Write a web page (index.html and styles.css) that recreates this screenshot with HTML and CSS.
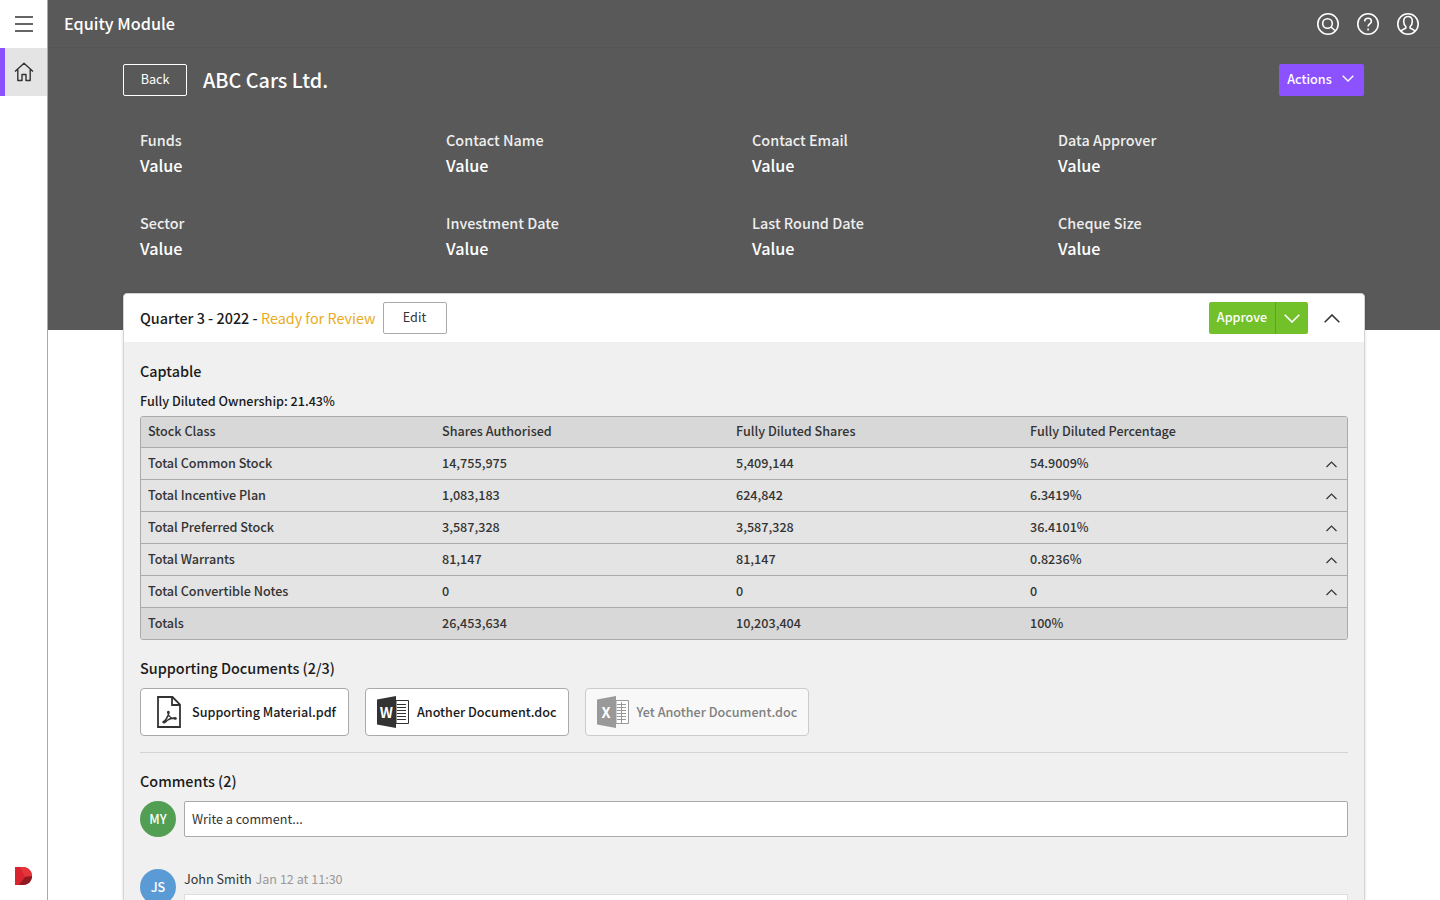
FILE: index.html
```html
<!DOCTYPE html>
<html lang="en">

<head>
  <meta charset="UTF-8">
  <meta name="viewport" content="width=device-width, initial-scale=1.0">
  <title>Equity Module</title>
  <link rel="stylesheet" href="styles.css">
</head>

<body>
  <div class="app">
    <nav class="sideNav">
      <div class="menuBtn">
        <svg width="18" height="16" viewBox="0 0 18 16" fill="none" stroke="#333" stroke-width="1.5">
          <path d="M0 1h18M0 8h18M0 15h18" />
        </svg>
      </div>
      <div class="navItem">
        <svg width="20" height="20" viewBox="0 0 20 20" fill="none" stroke="#333" stroke-width="1.4" stroke-linejoin="round">
          <path d="M1 9.500 10 1.200l9 8.300M3.800 7.500V18.500h4.200v-6h4v6h4.200V7.500" />
        </svg>
      </div>
      <div class="navLogo">
        <svg width="17" height="18" viewBox="0 0 17 18">
          <path d="M0 0h8c5 0 9 4 9 9s-4 9-9 9H0z" fill="#d9232e" />
          <path d="M5 0h3c5 0 9 4 9 9l-7 1z" fill="#e5343a" />
          <path d="M17 9c0 5-4 9-9 9H4l6-8z" fill="#8f1a20" />
        </svg>
      </div>
    </nav>

    <div class="mainWrap">
      <header class="topBar">
        <span class="topTitle">Equity Module</span>
        <div class="topIcons">
          <svg width="24" height="24" viewBox="0 0 24 24" fill="none" stroke="#fff" stroke-width="1.6">
            <circle cx="12" cy="12" r="10.200" />
            <circle cx="11.500" cy="11.500" r="4.800" />
            <path d="m15 15 4 3.500" />
          </svg>
          <svg width="24" height="24" viewBox="0 0 24 24" fill="none" stroke="#fff" stroke-width="1.6">
            <circle cx="12" cy="12" r="10.200" />
            <path d="M8.700 9.500c0-2 1.500-3.300 3.400-3.300s3.300 1.200 3.300 3c0 2.600-3.300 2.700-3.300 5.300" />
            <path d="M12.100 16.500v2" />
          </svg>
          <svg width="24" height="24" viewBox="0 0 24 24" fill="none" stroke="#fff" stroke-width="1.6">
            <circle cx="12" cy="12" r="10.200" />
            <path d="M5 19.500c.5-2 3.400-2.300 4.800-3.400v-1.600C8.300 13.300 7.700 11.400 7.700 9.500c0-3 1.700-5 4.300-5s4.300 2 4.300 5c0 1.900-.6 3.800-2.100 5v1.600c1.400 1.100 4.300 1.400 4.800 3.400" />
          </svg>
        </div>
      </header>

      <section class="banner">
        <div class="bannerHead">
          <a class="btn btnBack">Back</a>
          <h1>ABC Cars Ltd.</h1>
          <a class="btn btnActions">Actions
            <svg width="12" height="7" viewBox="0 0 12 7" fill="none" stroke="#fff" stroke-width="1.4">
              <path d="m.7.700 5.300 5.300 5.300-5.300" />
            </svg>
          </a>
        </div>
        <dl class="infoGrid">
          <div><dt>Funds</dt><dd>Value</dd></div>
          <div><dt>Contact Name</dt><dd>Value</dd></div>
          <div><dt>Contact Email</dt><dd>Value</dd></div>
          <div><dt>Data Approver</dt><dd>Value</dd></div>
          <div><dt>Sector</dt><dd>Value</dd></div>
          <div><dt>Investment Date</dt><dd>Value</dd></div>
          <div><dt>Last Round Date</dt><dd>Value</dd></div>
          <div><dt>Cheque Size</dt><dd>Value</dd></div>
        </dl>
      </section>

      <section class="card">
        <div class="cardHead">
          <h2 class="quarter">Quarter 3 - 2022 - <span class="status">Ready for Review</span></h2>
          <a class="btn btnEdit">Edit</a>
          <div class="approveGroup">
            <a class="approveBtn">Approve</a>
            <a class="approveArrow">
              <svg width="16" height="9" viewBox="0 0 16 9" fill="none" stroke="#fff" stroke-width="1.600">
                <path d="m.7.700 7.300 7.300 7.300-7.300" />
              </svg>
            </a>
          </div>
          <svg class="collapse" width="16" height="9" viewBox="0 0 16 9" fill="none" stroke="#333" stroke-width="1.600">
            <path d="m.7 8.300 7.300-7.300 7.300 7.300" />
          </svg>
        </div>

        <div class="cardBody">
          <h3>Captable</h3>
          <p class="ownership">Fully Diluted Ownership: 21.43%</p>

          <div class="capTable">
            <div class="row rowHead">
              <span>Stock Class</span><span>Shares Authorised</span><span>Fully Diluted Shares</span><span>Fully Diluted Percentage</span>
            </div>
            <div class="row">
              <span>Total Common Stock</span><span>14,755,975</span><span>5,409,144</span><span>54.9009%</span>
              <svg class="rowArrow" width="11" height="7" viewBox="0 0 11 7" fill="none" stroke="#333" stroke-width="1.200"><path d="m.5 6 5-5 5 5" /></svg>
            </div>
            <div class="row">
              <span>Total Incentive Plan</span><span>1,083,183</span><span>624,842</span><span>6.3419%</span>
              <svg class="rowArrow" width="11" height="7" viewBox="0 0 11 7" fill="none" stroke="#333" stroke-width="1.200"><path d="m.5 6 5-5 5 5" /></svg>
            </div>
            <div class="row">
              <span>Total Preferred Stock</span><span>3,587,328</span><span>3,587,328</span><span>36.4101%</span>
              <svg class="rowArrow" width="11" height="7" viewBox="0 0 11 7" fill="none" stroke="#333" stroke-width="1.200"><path d="m.5 6 5-5 5 5" /></svg>
            </div>
            <div class="row">
              <span>Total Warrants</span><span>81,147</span><span>81,147</span><span>0.8236%</span>
              <svg class="rowArrow" width="11" height="7" viewBox="0 0 11 7" fill="none" stroke="#333" stroke-width="1.200"><path d="m.5 6 5-5 5 5" /></svg>
            </div>
            <div class="row">
              <span>Total Convertible Notes</span><span>0</span><span>0</span><span>0</span>
              <svg class="rowArrow" width="11" height="7" viewBox="0 0 11 7" fill="none" stroke="#333" stroke-width="1.200"><path d="m.5 6 5-5 5 5" /></svg>
            </div>
            <div class="row rowTotal">
              <span>Totals</span><span>26,453,634</span><span>10,203,404</span><span>100%</span>
            </div>
          </div>

          <h3 class="docsTitle">Supporting Documents (2/3)</h3>
          <div class="docs">
            <a class="docBtn docPdf">
              <svg width="24" height="32" viewBox="0 0 24 32" fill="none" stroke="#333" stroke-width="1.800">
                <path d="M1 1h14.500L23 8.500V31H1zM15 1v8h8" />
                <path d="M6 26c2-.5 5-5 6-9.500.3-1.500-1.500-1.500-1.300 0 .5 3.500 4 6 7.500 6.500 1.200.2 1.200-1.300 0-1.200-3.200.2-7.200 1.500-9.700 4.200-1 1-2.500.8-2.500 0z" stroke-width="1.500" />
              </svg>
              Supporting Material.pdf
            </a>
            <a class="docBtn">
              <svg width="32" height="32" viewBox="0 0 32 32">
                <path d="M19 4.500h12.500v23H19z" fill="#fff" stroke="#333" />
                <path d="M20 8.500h9M20 11.500h9M20 14.500h9M20 17.500h9M20 20.500h9M20 23.500h9" stroke="#333" />
                <path d="M0 3.500 19 0v32L0 28.500z" fill="#333" />
              </svg>
              <span class="docGlyph">W</span>
              Another Document.doc
            </a>
            <a class="docBtn docDisabled">
              <svg width="32" height="32" viewBox="0 0 32 32">
                <path d="M19 4.500h12.500v23H19z" fill="#fff" stroke="#999" />
                <path d="M20 8.500h9M20 11.500h9M20 14.500h9M20 17.500h9M20 20.500h9M20 23.500h9M24.500 6v21" stroke="#999" />
                <path d="M0 3.500 19 0v32L0 28.500z" fill="#999" />
              </svg>
              <span class="docGlyph">X</span>
              Yet Another Document.doc
            </a>
          </div>

          <hr class="divider">

          <h3 class="commentsTitle">Comments (2)</h3>
          <div class="commentNew">
            <span class="avatar avatarGreen">MY</span>
            <div class="commentInput">Write a comment...</div>
          </div>
          <div class="comment">
            <span class="avatar avatarBlue">JS</span>
            <div class="commentMain">
              <div class="commentMeta"><span class="commentName">John Smith</span><span class="commentDate">Jan 12 at 11:30</span></div>
              <div class="commentText"></div>
            </div>
          </div>
        </div>
      </section>
    </div>
  </div>
</body>

</html>
```
FILE: styles.css
```css
* {
  box-sizing: border-box;
}

html,
body {
  height: 100%;
  margin: 0;
  overflow: hidden;
}

body {
  background-color: #fff;
  color: #333;
  font-family: "Noto Sans CJK JP", "Noto Sans", sans-serif;
  font-size: 12.6px;
  line-height: 20px;
}

.app {
  display: flex;
  height: 900px;
}

/* side nav */
.sideNav {
  display: flex;
  flex-direction: column;
  flex: 0 0 48px;
  border-right: 1px solid #aaa;
}

.menuBtn {
  display: flex;
  align-items: center;
  justify-content: center;
  height: 48px;
}

.navItem {
  display: flex;
  align-items: center;
  justify-content: center;
  height: 48px;
  background-color: #e4e4e4;
  border-left: 5px solid #8c52ff;
  padding-right: 5px;
}

.navLogo {
  display: flex;
  justify-content: center;
  margin-top: auto;
  padding-bottom: 15px;
}

/* top */
.mainWrap {
  flex: 1;
  min-width: 0;
}

.topBar {
  display: flex;
  align-items: center;
  justify-content: space-between;
  height: 48px;
  padding: 0 20px 0 16px;
  background-color: #595959;
  border-bottom: 1px solid #555;
}

.topTitle {
  margin-top: -1px;
  color: #fff;
  font-size: 16.2px;
  font-weight: 500;
}

.topIcons {
  display: flex;
  gap: 16px;
}

.banner {
  height: 282px;
  padding: 16px 76px 0 75px;
  background-color: #595959;
  color: #fff;
}

.bannerHead {
  display: flex;
  align-items: center;
  height: 32px;
}

.bannerHead h1 {
  margin: -1px 0 0 16px;
  font-size: 19.8px;
  font-weight: 500;
}

.btn {
  display: flex;
  align-items: center;
  justify-content: center;
  height: 32px;
  padding-bottom: 3px;
  border-radius: 2px;
}

.btnBack {
  width: 64px;
  border: 1px solid #fff;
  color: #fff;
}

.btnActions {
  gap: 10px;
  width: 85px;
  margin-left: auto;
  padding-right: 2px;
  background-color: #8c52ff;
  color: #fff;
  font-weight: 500;
}

.infoGrid {
  display: grid;
  grid-template-columns: repeat(4, 306px);
  row-gap: 33px;
  margin: 32px 0 0;
  padding-left: 17px;
}

.infoGrid dt {
  font-size: 14.4px;
  font-weight: 500;
  line-height: 24px;
  color: #eee;
}

.infoGrid dd {
  margin: 0;
  font-size: 16.2px;
  font-weight: 500;
  line-height: 26px;
}

/* card */
.card {
  margin: -37px 75px 0;
  border: 1px solid #d4d4d4;
  border-radius: 4px 4px 0 0;
  background-color: #f0f0f0;
  box-shadow: 0 0 3px rgba(0, 0, 0, .15);
  position: relative;
}

.cardHead {
  display: flex;
  align-items: center;
  height: 48px;
  padding: 0 24px 0 16px;
  background-color: #fff;
  border-radius: 4px 4px 0 0;
}

.quarter {
  margin: 0;
  color: #1a1a1a;
  font-size: 14.4px;
  font-weight: 500;
}

.status {
  color: #eaab1c;
  font-weight: 400;
}

.btnEdit {
  width: 64px;
  margin-left: 7px;
  border: 1px solid #aaa;
}

.approveGroup {
  display: flex;
  height: 32px;
  margin-left: auto;
  background-color: #72c12a;
  border-radius: 2px;
  color: #fff;
}

.approveBtn {
  display: flex;
  align-items: center;
  justify-content: center;
  width: 67px;
  padding-bottom: 3px;
  border-right: 1px solid #5ea51c;
  font-weight: 500;
}

.approveArrow {
  display: flex;
  align-items: center;
  justify-content: center;
  width: 32px;
}

.collapse {
  margin-left: 16px;
}

.cardBody {
  padding: 17px 16px 0;
}

.cardBody h3 {
  margin: 0;
  color: #1a1a1a;
  font-size: 14.4px;
  font-weight: 500;
  line-height: 24px;
}

.ownership {
  margin: 8px 0 5px;
  color: #1a1a1a;
  font-weight: 500;
}

/* table */
.capTable {
  border: 1px solid #aaa;
  border-radius: 3px;
  background-color: #e4e4e4;
}

.row {
  display: grid;
  grid-template-columns: repeat(4, 294px) 1fr;
  align-items: center;
  height: 32px;
  padding: 0 10px 1px 7px;
  border-top: 1px solid #aaa;
  font-weight: 500;
}

.rowHead {
  height: 30px;
  padding-bottom: 2px;
  border-top: 0;
  background-color: #d8d8d8;
  border-radius: 3px 3px 0 0;
}

.rowTotal {
  background-color: #d8d8d8;
  border-radius: 0 0 3px 3px;
}

.rowArrow {
  justify-self: end;
  margin-top: 2px;
}

/* docs */
.docsTitle {
  margin-top: 16px !important;
}

.docs {
  display: flex;
  gap: 16px;
  margin-top: 8px;
}

.docBtn {
  display: flex;
  align-items: center;
  position: relative;
  gap: 8px;
  height: 48px;
  padding: 0 11px;
  background-color: #fff;
  border: 1px solid #aaa;
  border-radius: 4px;
  color: #1a1a1a;
  font-weight: 500;
}

.docPdf {
  gap: 11px;
  padding: 0 12px 0 16px;
}

.docDisabled {
  background-color: #f8f8f8;
  border-color: #ccc;
  color: #808080;
}

.docGlyph {
  position: absolute;
  left: 12px;
  width: 17px;
  color: #fff;
  font-size: 14.4px;
  font-weight: 700;
  text-align: center;
}

.divider {
  margin: 16px 0 0;
  border: 0;
  border-top: 1px solid #d4d4d4;
}

.commentsTitle {
  margin-top: 16px !important;
}

.commentNew,
.comment {
  display: flex;
  gap: 8px;
}

.commentNew {
  align-items: center;
  margin-top: 8px;
}

.comment {
  margin-top: 32px;
}

.avatar {
  display: flex;
  align-items: center;
  justify-content: center;
  flex: 0 0 36px;
  height: 36px;
  border-radius: 50%;
  color: #fff;
  font-weight: 500;
}

.avatarGreen {
  background-color: #529e52;
}

.avatarBlue {
  background-color: #5b9bd5;
}

.commentInput {
  flex: 1;
  height: 36px;
  padding: 7px;
  background-color: #fff;
  border: 1px solid #aaa;
  border-radius: 2px;
}

.commentMain {
  flex: 1;
}

.commentMeta {
  display: flex;
  align-items: baseline;
  gap: 4px;
}

.commentDate {
  color: #999;
}

.commentText {
  height: 40px;
  margin-top: 5px;
  background-color: #fff;
  border: 1px solid #ddd;
}
```
